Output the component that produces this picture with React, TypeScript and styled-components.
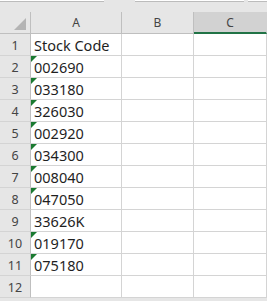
import styled, { createGlobalStyle } from "styled-components";

const GlobalStyle = createGlobalStyle`
  html, body {
    margin: 0;
    padding: 0;
    background: #ffffff;
    overflow: hidden;
  }
`;

const Sheet = styled.div`
  width: 267px;
  height: 301px;
  background: #e6e6e6;
  font-family: "Noto Sans", "Open Sans", sans-serif;
  overflow: hidden;
`;

const TopStrip = styled.div`
  height: 2px;
  display: grid;
  grid-template-columns: 104px 31px 109px 4px 1fr;
  margin-bottom: 10px;
`;

const StripBox = styled.div<{ $on?: boolean }>`
  background: ${(p) => (p.$on ? "#ffffff" : "transparent")};
  border-bottom: ${(p) => (p.$on ? "1px solid #bcbcbc" : "none")};
`;

const Grid = styled.div`
  display: grid;
  grid-template-columns: 31px 91px 72px 73px;
  grid-auto-rows: 22px;
`;

const Corner = styled.div`
  position: relative;
  border-right: 1px solid #bfbfbf;
  border-bottom: 1px solid #bfbfbf;
`;

const CornerTriangle = styled.div`
  position: absolute;
  right: 4px;
  bottom: 3px;
  width: 0;
  height: 0;
  border-left: 12px solid transparent;
  border-bottom: 12px solid #b4b4b4;
`;

const ColHead = styled.div<{ $selected?: boolean }>`
  display: flex;
  align-items: center;
  justify-content: center;
  font-size: 12px;
  color: #444444;
  background: ${(p) => (p.$selected ? "#d2d2d2" : "#e6e6e6")};
  border-right: 1px solid ${(p) => (p.$selected ? "#d2d2d2" : "#bfbfbf")};
  border-bottom: ${(p) => (p.$selected ? "2px solid #217346" : "1px solid #bfbfbf")};
  box-sizing: border-box;
`;

const RowHead = styled.div`
  display: flex;
  align-items: center;
  justify-content: center;
  font-size: 12.5px;
  color: #444444;
  background: #e6e6e6;
  border-right: 1px solid #bfbfbf;
  border-bottom: 1px solid #d4d4d4;
  padding-top: 1px;
  box-sizing: border-box;
`;

const Cell = styled.div<{ $flag?: boolean }>`
  position: relative;
  display: flex;
  align-items: center;
  padding-left: 3px;
  padding-top: 1px;
  font-size: 14.5px;
  color: #1f1f1f;
  background: #ffffff;
  border-right: 1px solid #d4d4d4;
  border-bottom: 1px solid #d4d4d4;
  box-sizing: border-box;
  white-space: nowrap;
  overflow: visible;

  /* the little "number stored as text" flag */
  &::before {
    content: "";
    display: ${(p) => (p.$flag ? "block" : "none")};
    position: absolute;
    left: 0;
    top: 0;
    width: 0;
    height: 0;
    border-top: 6px solid #1a7a30;
    border-right: 6px solid transparent;
  }
`;

const codes = [
  "Stock Code",
  "002690",
  "033180",
  "326030",
  "002920",
  "034300",
  "008040",
  "047050",
  "33626K",
  "019170",
  "075180",
  "",
];

export default function App() {
  return (
    <Sheet>
      <GlobalStyle />
      <TopStrip>
        <StripBox $on />
        <StripBox />
        <StripBox $on />
        <StripBox />
        <StripBox $on />
      </TopStrip>
      <Grid>
        <Corner>
          <CornerTriangle />
        </Corner>
        <ColHead>A</ColHead>
        <ColHead>B</ColHead>
        <ColHead $selected>C</ColHead>
        {codes.map((code, i) => (
          <Row key={i} n={i + 1} code={code} />
        ))}
      </Grid>
    </Sheet>
  );
}

function Row({ n, code }: { n: number; code: string }) {
  const flag = /^\d+$/.test(code);
  return (
    <>
      <RowHead>{n}</RowHead>
      <Cell $flag={flag}>{code}</Cell>
      <Cell />
      <Cell />
    </>
  );
}
